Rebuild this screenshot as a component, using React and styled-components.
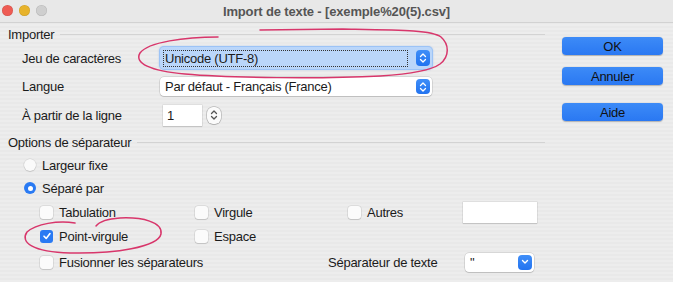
import React from "react";
import styled, { createGlobalStyle } from "styled-components";

const Global = createGlobalStyle`
  html, body { margin: 0; padding: 0; }
  body {
    font-family: "Liberation Sans", Arial, sans-serif;
    font-size: 13px;
    letter-spacing: -0.25px;
    color: #1b1b1b;
    background: #ececec;
  }
  * { box-sizing: border-box; }
`;

const Window = styled.div`
  position: relative;
  width: 673px;
  height: 282px;
  overflow: hidden;
  background: repeating-linear-gradient(#ededed 0 2px, #e9e9e9 2px 4px);
`;

const TitleBar = styled.div`
  position: relative;
  height: 23px;
  display: flex;
  align-items: center;
  justify-content: center;
  background: #e8e8e8;
  border-bottom: 1px solid #d2d2d2;
`;

const Lights = styled.div`
  position: absolute;
  left: 2px;
  top: 5px;
  display: flex;
  gap: 6px;
`;

const Light = styled.span`
  width: 11px;
  height: 11px;
  border-radius: 50%;
  background: ${(p) => p.$c};
  box-shadow: inset 0 0 0 0.5px rgba(0, 0, 0, 0.12);
`;

const Title = styled.div`
  font-weight: 700;
  font-size: 13px;
  color: #555;
  letter-spacing: -0.15px;
`;

const Body = styled.div`
  display: flex;
`;

const Main = styled.div`
  width: 548px;
  padding-left: 8px;
  display: flex;
  flex-direction: column;
`;

const SectionHeader = styled.div`
  display: flex;
  align-items: center;
  height: 16px;
  margin-top: ${(p) => p.$mt}px;
  gap: 6px;
  &::after {
    content: "";
    flex: 1;
    height: 1px;
    background: #d3d3d3;
    margin-right: 3px;
  }
`;

const FormGrid = styled.div`
  display: grid;
  grid-template-columns: 138px 272px;
  grid-auto-rows: 22px;
  row-gap: 6.5px;
  padding-left: 14px;
  margin-top: 5px;
  align-items: center;
`;

const Label = styled.span`
  white-space: nowrap;
`;

const Select = styled.div`
  display: flex;
  align-items: center;
  height: ${(p) => (p.$focused ? 22 : 19)}px;
  width: ${(p) => p.$w || "100%"};
  padding: 0 2px 0 3px;
  border-radius: 4px;
  background: ${(p) => (p.$focused ? "#bad6fa" : "#ffffff")};
  box-shadow: ${(p) =>
    p.$focused
      ? "0 0 0 1px #9cc3f6, 0 0 2px 1px rgba(80,140,230,0.35)"
      : "0 0 0 0.5px rgba(0,0,0,0.18), 0 1px 1px rgba(0,0,0,0.12)"};
`;

const SelectText = styled.span`
  flex: 1;
  white-space: nowrap;
  padding: 1px 1px;
  border: 1px dotted ${(p) => (p.$focused ? "#333" : "transparent")};
  line-height: 13px;
`;

const BlueKnob = styled.span`
  display: flex;
  align-items: center;
  justify-content: center;
  width: 14px;
  height: ${(p) => p.$h || 16}px;
  margin-left: 8px;
  border-radius: 4px;
  background: linear-gradient(#3f8ef8, #2273f0);
`;

const NumberWrap = styled.div`
  display: flex;
  align-items: center;
  gap: 5px;
  padding-left: 3px;
`;

const NumberBox = styled.div`
  width: 39px;
  height: 21px;
  background: #fff;
  padding: 3px 4px;
  box-shadow: 0 0 0 0.5px rgba(0, 0, 0, 0.12), 0 1px 1px rgba(0, 0, 0, 0.1);
`;

const Spin = styled.span`
  display: flex;
  align-items: center;
  justify-content: center;
  width: 14px;
  height: 17px;
  border-radius: 6px;
  background: #fbfbfb;
  box-shadow: 0 0 0 0.5px rgba(0, 0, 0, 0.3), 0 1px 1px rgba(0, 0, 0, 0.12);
`;

const OptionRow = styled.div`
  display: flex;
  align-items: center;
  gap: 6px;
  height: 22px;
  margin-top: ${(p) => p.$mt}px;
  padding-left: ${(p) => p.$pl}px;
`;

const Radio = styled.span`
  width: 12px;
  height: 12px;
  border-radius: 50%;
  display: flex;
  align-items: center;
  justify-content: center;
  background: ${(p) => (p.$on ? "#2a7af3" : "#fafafa")};
  box-shadow: ${(p) =>
    p.$on ? "none" : "0 0 0 0.5px rgba(0,0,0,0.12), 0 1px 1px rgba(0,0,0,0.1)"};
  &::after {
    content: "";
    width: 5px;
    height: 5px;
    border-radius: 50%;
    background: #fff;
    display: ${(p) => (p.$on ? "block" : "none")};
  }
`;

const CheckGrid = styled.div`
  display: grid;
  grid-template-columns: 155px 153px 115px 74px;
  grid-auto-rows: 22px;
  row-gap: 2px;
  margin-top: 2px;
  padding-left: 32px;
  align-items: center;
`;

const CheckItem = styled.label`
  display: flex;
  align-items: center;
  gap: 6px;
  white-space: nowrap;
`;

const Box = styled.span`
  width: 13px;
  height: 13px;
  border-radius: 3px;
  display: flex;
  align-items: center;
  justify-content: center;
  background: ${(p) => (p.$on ? "#2a7af3" : "#fbfbfb")};
  box-shadow: ${(p) =>
    p.$on ? "none" : "0 0 0 0.5px rgba(0,0,0,0.14), 0 1px 1px rgba(0,0,0,0.1)"};
`;

const TextField = styled.div`
  width: 74px;
  height: 21px;
  background: #fff;
  box-shadow: 0 0 0 0.5px rgba(0, 0, 0, 0.12), 0 1px 1px rgba(0, 0, 0, 0.1);
`;

const LastRow = styled.div`
  display: grid;
  grid-template-columns: 288px 137px 69px;
  height: 22px;
  margin-top: 4px;
  padding-left: 32px;
  align-items: center;
`;

const ButtonCol = styled.div`
  width: 101px;
  margin-left: 14px;
  padding-top: 14px;
  display: flex;
  flex-direction: column;
`;

const Button = styled.div`
  height: 18px;
  margin-top: ${(p) => p.$mt || 0}px;
  border-radius: 4px;
  display: flex;
  align-items: center;
  justify-content: center;
  background: linear-gradient(#3d8bf7, #2a78f2);
  box-shadow: 0 0.5px 1px rgba(0, 0, 0, 0.25);
  color: #111;
  font-size: 13px;
`;

const Overlay = styled.svg`
  position: absolute;
  inset: 0;
  pointer-events: none;
`;

const UpDown = ({ color = "#fff" }) => (
  <svg width="8" height="12" viewBox="0 0 8 12">
    <path d="M1.5 4.5 L4 2 L6.5 4.5" fill="none" stroke={color} strokeWidth="1.3" strokeLinecap="round" strokeLinejoin="round" />
    <path d="M1.5 7.5 L4 10 L6.5 7.5" fill="none" stroke={color} strokeWidth="1.3" strokeLinecap="round" strokeLinejoin="round" />
  </svg>
);

const Down = () => (
  <svg width="8" height="6" viewBox="0 0 8 6">
    <path d="M1.5 1.5 L4 4 L6.5 1.5" fill="none" stroke="#fff" strokeWidth="1.4" strokeLinecap="round" strokeLinejoin="round" />
  </svg>
);

const Tick = () => (
  <svg width="10" height="10" viewBox="0 0 10 10">
    <path d="M2 5.2 L4.2 7.4 L8 2.6" fill="none" stroke="#fff" strokeWidth="1.6" strokeLinecap="round" strokeLinejoin="round" />
  </svg>
);

const Check = ({ on, children }) => (
  <CheckItem>
    <Box $on={on}>{on && <Tick />}</Box>
    {children}
  </CheckItem>
);

export default function App() {
  return (
    <Window>
      <Global />
      <TitleBar>
        <Lights>
          <Light $c="#ee5b53" />
          <Light $c="#e7b32b" />
          <Light $c="#cfcfcf" />
        </Lights>
        <Title>Import de texte - [exemple%20(5).csv]</Title>
      </TitleBar>
      <Body>
        <Main>
          <SectionHeader $mt={3}>Importer</SectionHeader>
          <FormGrid>
            <Label>Jeu de caractères</Label>
            <Select $focused>
              <SelectText $focused>Unicode (UTF-8)</SelectText>
              <BlueKnob>
                <UpDown />
              </BlueKnob>
            </Select>
            <Label>Langue</Label>
            <Select>
              <SelectText>Par défaut - Français (France)</SelectText>
              <BlueKnob $h={15}>
                <UpDown />
              </BlueKnob>
            </Select>
            <Label>À partir de la ligne</Label>
            <NumberWrap>
              <NumberBox>1</NumberBox>
              <Spin>
                <UpDown color="#555" />
              </Spin>
            </NumberWrap>
          </FormGrid>
          <SectionHeader $mt={8}>Options de séparateur</SectionHeader>
          <OptionRow $mt={4} $pl={16}>
            <Radio />
            Largeur fixe
          </OptionRow>
          <OptionRow $mt={1} $pl={16}>
            <Radio $on />
            Séparé par
          </OptionRow>
          <CheckGrid>
            <Check>Tabulation</Check>
            <Check>Virgule</Check>
            <Check>Autres</Check>
            <TextField />
            <Check on>Point-virgule</Check>
            <Check>Espace</Check>
          </CheckGrid>
          <LastRow>
            <Check>Fusionner les séparateurs</Check>
            <Label>Séparateur de texte</Label>
            <Select $w="69px">
              <SelectText>"</SelectText>
              <BlueKnob $h={15}>
                <Down />
              </BlueKnob>
            </Select>
          </LastRow>
        </Main>
        <ButtonCol>
          <Button $mt={0}>OK</Button>
          <Button $mt={12}>Annuler</Button>
          <Button $mt={18}>Aide</Button>
        </ButtonCol>
      </Body>
      <Overlay width="673" height="282" viewBox="0 0 673 282">
        <g fill="none" stroke="#d8366b" strokeWidth="1.5" strokeLinecap="round">
          <path d="M218 37 C185 37 148 42 140 53 C134 63 150 71 185 74 C230 78 320 79 380 76 C410 74 432 70 440 64 C450 56 449 44 441 37 C432 30 400 30 343 29 L260 30" />
          <path d="M75 223 C58 220 36 224 27 232 C20 242 32 252 70 253 C115 254 158 247 161 234 C163 222 142 217 120 218 C106 219 99 222 96 226" />
        </g>
      </Overlay>
    </Window>
  );
}
